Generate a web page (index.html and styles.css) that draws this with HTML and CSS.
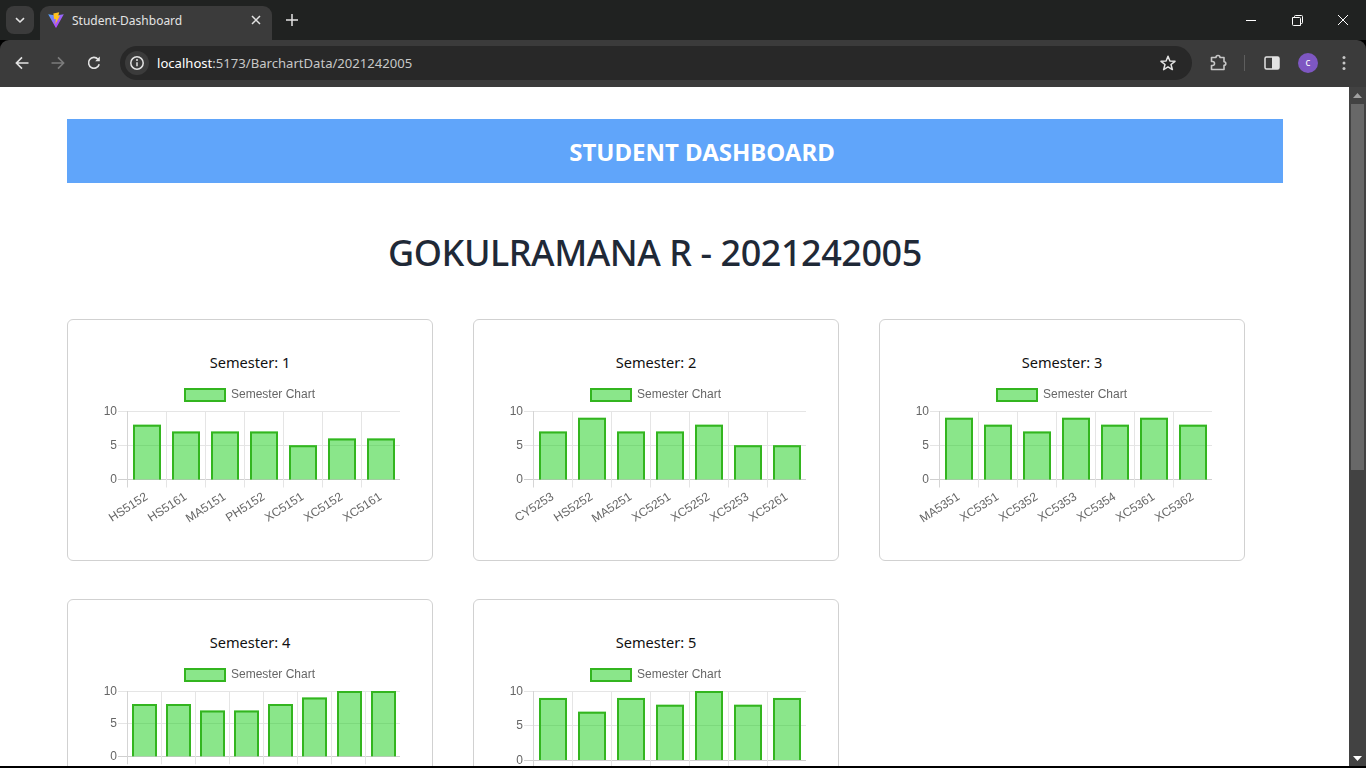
FILE: index.html
```html
<!DOCTYPE html>
<html lang="en">
<head>
  <meta charset="UTF-8">
  <title>Student-Dashboard</title>
  <link rel="stylesheet" href="styles.css">
</head>
<body>
  <div class="tabStrip">
    <div class="tabSearch">
      <svg width="12" height="12" viewBox="0 0 12 12"><path d="M2 4.2 6 8l4-3.8" fill="none" stroke="#e3e3e3" stroke-width="1.6"/></svg>
    </div>
    <div class="tab">
      <svg class="favicon" width="16" height="16" viewBox="0 0 16 16">
        <defs>
          <linearGradient id="viteBody" x1="0" y1="0" x2="1" y2="1">
            <stop offset="0" stop-color="#4fa8ff"/>
            <stop offset="0.6" stop-color="#a855f7"/>
            <stop offset="1" stop-color="#bd34fe"/>
          </linearGradient>
        </defs>
        <path d="M0.2 2.3 7.7 3.6 15.8 2.3 8.4 15.5Q8 16 7.6 15.5Z" fill="url(#viteBody)"/>
        <path d="M5.3 1.4 11.2 0.2 10.2 4 12 3.6 7.3 12.2 8 6.9 6.2 7.3Z" fill="#ffc21f"/>
      </svg>
      <span class="tabTitle">Student-Dashboard</span>
      <svg class="tabClose" width="10" height="10" viewBox="0 0 10 10"><path d="M1 1l8 8M9 1l-8 8" stroke="#e3e3e3" stroke-width="1.5"/></svg>
    </div>
    <svg class="newTab" width="12" height="12" viewBox="0 0 12 12"><path d="M6 0v12M0 6h12" stroke="#e3e3e3" stroke-width="1.5"/></svg>
    <div class="windowBtns">
      <svg width="46" height="12" viewBox="0 0 46 12"><path d="M18 6.5h10" stroke="#fff" stroke-width="1"/></svg>
      <svg width="46" height="12" viewBox="0 0 46 12"><path d="M18.5 3.5h7a1 1 0 0 1 1 1v7h-7a1 1 0 0 1-1-1Z M20.5 3.5v-1a1 1 0 0 1 1-1h6a1 1 0 0 1 1 1v6a1 1 0 0 1-1 1h-.5" fill="none" stroke="#fff" stroke-width="1"/></svg>
      <svg width="46" height="12" viewBox="0 0 46 12"><path d="M18 1l10 10M28 1 18 11" stroke="#fff" stroke-width="1"/></svg>
    </div>
  </div>

  <div class="toolbar">
    <svg class="navIcon" width="16" height="16" viewBox="0 0 16 16"><path d="M14.5 8H2.5M8 2.4 2.4 8 8 13.6" fill="none" stroke="#e3e3e3" stroke-width="1.6"/></svg>
    <svg class="navIcon" width="16" height="16" viewBox="0 0 16 16"><path d="M1.5 8h12M8 2.4 13.6 8 8 13.6" fill="none" stroke="#7c7c7c" stroke-width="1.6"/></svg>
    <svg class="navIcon" width="16" height="16" viewBox="0 0 16 16"><path d="M13.2 9.2A5.4 5.4 0 1 1 12 4.2" fill="none" stroke="#e3e3e3" stroke-width="1.6"/><path d="M13.8 1.6v4.6H9.2Z" fill="#e3e3e3"/></svg>
    <div class="addressBar">
      <div class="siteInfo">
        <svg width="16" height="16" viewBox="0 0 16 16"><circle cx="8" cy="8" r="6.2" fill="none" stroke="#e3e3e3" stroke-width="1.5"/><path d="M8 7.2v4" stroke="#e3e3e3" stroke-width="1.5"/><circle cx="8" cy="5" r="1" fill="#e3e3e3"/></svg>
      </div>
      <span class="url"><span class="host">localhost</span>:5173/BarchartData/2021242005</span>
      <svg class="star" width="18" height="18" viewBox="0 0 18 18"><path d="M9 2.2 10.9 7 16 7.3 12 10.5 13.4 15.6 9 12.8 4.6 15.6 6 10.5 2 7.3 7.1 7Z" fill="none" stroke="#e3e3e3" stroke-width="1.5" stroke-linejoin="round"/></svg>
    </div>
    <svg class="extIcon" width="18" height="18" viewBox="0 0 18 18"><path d="M2.5 3.5H7a2 2 0 0 1 4 0h4v4.2a1.8 1.8 0 0 1 0 3.6v4.2H2.5v-4h1a2 2 0 0 0 0-4h-1Z" fill="none" stroke="#c7c7c7" stroke-width="1.6" stroke-linejoin="round"/></svg>
    <div class="toolbarSep"></div>
    <svg class="sideIcon" width="16" height="16" viewBox="0 0 16 16"><rect x="1" y="2" width="14" height="12" rx="1.5" fill="none" stroke="#e3e3e3" stroke-width="1.5"/><rect x="8" y="2" width="7" height="12" fill="#e3e3e3"/></svg>
    <div class="avatar">c</div>
    <svg class="menuIcon" width="4" height="16" viewBox="0 0 4 16"><circle cx="2" cy="2.5" r="1.5" fill="#c7c7c7"/><circle cx="2" cy="8" r="1.5" fill="#c7c7c7"/><circle cx="2" cy="13.5" r="1.5" fill="#c7c7c7"/></svg>
  </div>

  <div class="viewport">
    <main class="page">
      <div class="container">
        <header class="banner">STUDENT DASHBOARD</header>
        <div class="content">
          <h1 class="studentName">GOKULRAMANA R - 2021242005</h1>
          <div class="cardGrid" id="cardGrid"></div>
        </div>
      </div>
    </main>
    <div class="scrollbar">
      <svg class="arrow" width="9" height="5" viewBox="0 0 9 5"><path d="M4.5 0 9 5H0Z" fill="#a0a0a0"/></svg>
      <div class="thumb"></div>
      <svg class="arrow arrowDown" width="9" height="5" viewBox="0 0 9 5"><path d="M0 0h9L4.5 5Z" fill="#fff"/></svg>
    </div>
  </div>

  <script src="charts.js"></script>
</body>
</html>
```

FILE: styles.css
```css
* { box-sizing: border-box; }
html, body { height: 100%; }
body {
  margin: 0;
  height: 768px;
  overflow: hidden;
  background-color: #000;
  font-family: "Noto Sans", "Open Sans", sans-serif;
}

/* browser chrome */
.tabStrip {
  height: 40px;
  background-color: #202221;
  display: flex;
  align-items: flex-start;
}
.tabSearch {
  width: 28px;
  height: 28px;
  margin: 6px 0 0 6px;
  background-color: #3b3b3b;
  border-radius: 8px;
  display: flex;
  align-items: center;
  justify-content: center;
}
.tab {
  width: 232px;
  height: 34px;
  margin: 6px 0 0 6px;
  padding: 0 11px 6px 8px;
  background-color: #3b3b3b;
  border-radius: 9px 9px 0 0;
  display: flex;
  align-items: center;
  color: #e3e3e3;
  font-size: 12px;
}
.tabTitle { flex: 1; margin-left: 8px; }
.newTab { margin: 14px 0 0 14px; }
.windowBtns {
  margin-left: auto;
  margin-top: 14px;
  display: flex;
}
.windowBtns svg { display: block; }

.toolbar {
  height: 47px;
  background-color: #3b3b3b;
  border-radius: 9px 9px 0 0;
  display: flex;
  align-items: center;
  padding: 0 0 1px 14px;
}
.navIcon { margin-right: 20px; }
.addressBar {
  width: 1072px;
  height: 34px;
  margin-left: -2px;
  padding: 0 15px 0 5px;
  background-color: #282828;
  border-radius: 17px;
  display: flex;
  align-items: center;
}
.siteInfo {
  width: 24px;
  height: 24px;
  background-color: #3b3b3b;
  border-radius: 50%;
  display: flex;
  align-items: center;
  justify-content: center;
}
.url {
  flex: 1;
  margin-left: 8px;
  font-size: 13.1px;
  color: #c7c7c7;
}
.host { color: #fff; }
.extIcon { margin-left: 17px; }
.toolbarSep {
  width: 1px;
  height: 16px;
  margin-left: 17px;
  background-color: #5e5e5e;
}
.sideIcon { margin-left: 19px; }
.avatar {
  width: 20px;
  height: 20px;
  margin-left: 18px;
  background-color: #7e57c2;
  border-radius: 50%;
  color: #fff;
  font-size: 10px;
  line-height: 19px;
  text-align: center;
}
.menuIcon { margin-left: 24px; }

/* page */
.viewport {
  height: 679px;
  display: flex;
}
.page {
  flex: 1;
  overflow: hidden;
  background-color: #fff;
}
.container {
  width: 1216px;
  margin: 32px 0 0 67px;
}
.banner {
  height: 64px;
  background-color: #60a5fa;
  color: #fff;
  font-size: 24px;
  font-weight: 700;
  line-height: 66px;
  text-align: center;
  padding-left: 54px;
}
.content { width: 1178px; }
.studentName {
  margin: 45px 0 41px;
  height: 50px;
  color: #1f2937;
  font-size: 36px;
  font-weight: 500;
  letter-spacing: -0.46px;
  line-height: 50px;
  text-align: center;
  padding-right: 2px;
}
.cardGrid {
  display: grid;
  grid-template-columns: repeat(3, 366px);
  column-gap: 40px;
  row-gap: 38px;
}
.card {
  height: 242px;
  padding: 32px 22px 0;
  background-color: #fff;
  border: 1px solid #d1d1d1;
  border-radius: 6px;
}
.cardTitle {
  margin: 0 0 12px;
  color: #111;
  font-size: 14.6px;
  line-height: 20px;
  text-align: center;
}
.chart {
  display: block;
  will-change: transform;
}
.chart text {
  font-family: "Liberation Sans", Arial, sans-serif;
  font-size: 12px;
  fill: #666;
}

/* fake scrollbar */
.scrollbar {
  width: 17px;
  background-color: #424242;
  display: flex;
  flex-direction: column;
  align-items: center;
}
.arrow { margin-top: 6px; }
.thumb {
  width: 13px;
  height: 366px;
  margin-top: 6px;
  background-color: #686868;
}
.arrowDown { margin-top: auto; margin-bottom: 5px; }
```

FILE: charts.js
```js
// labels of the second row sit below the fold, so they are left out
const semesters = [
  { sem: 1, bottom: 95.5, marks: [8, 7, 7, 7, 5, 6, 6], labels: ["HS5152", "HS5161", "MA5151", "PH5152", "XC5151", "XC5152", "XC5161"] },
  { sem: 2, bottom: 95.5, marks: [7, 9, 7, 7, 8, 5, 5], labels: ["CY5253", "HS5252", "MA5251", "XC5251", "XC5252", "XC5253", "XC5261"] },
  { sem: 3, bottom: 95.5, marks: [9, 8, 7, 9, 8, 9, 8], labels: ["MA5351", "XC5351", "XC5352", "XC5353", "XC5354", "XC5361", "XC5362"] },
  { sem: 4, bottom: 92.3, marks: [8, 8, 7, 7, 8, 9, 10, 10], labels: [] },
  { sem: 5, bottom: 96, marks: [9, 7, 9, 8, 10, 8, 9], labels: [] }
];

const plotLeft = 37;
const plotRight = 310;
const plotTop = 27;

function drawChart(item) {
  const step = (plotRight - plotLeft) / item.marks.length;
  const height = item.bottom - plotTop;
  let svg = '<svg class="chart" width="320" height="146" viewBox="0 0 320 146">';

  // legend
  svg += '<rect x="95" y="5" width="40" height="12" fill="#8ae68a" stroke="#33b51f" stroke-width="2"/>';
  svg += '<text x="141" y="14">Semester Chart</text>';

  // y axis
  [10, 5, 0].forEach((tick) => {
    const y = Math.floor(plotTop + height * (1 - tick / 10)) + 0.5;
    const color = tick === 0 ? "#cfcfcf" : "#e5e5e5";
    svg += `<path d="M28 ${y}H${plotRight}" stroke="${color}"/>`;
    svg += `<text x="27" y="${y + 3}" text-anchor="end">${tick}</text>`;
  });

  item.marks.forEach((mark, i) => {
    const lineX = Math.floor(plotLeft + step * i) + 0.5;
    svg += `<path d="M${lineX} ${plotTop}V${item.bottom + 8}" stroke="${i === 0 ? "#d5d5d5" : "#e5e5e5"}"/>`;
  });

  item.marks.forEach((mark, i) => {
    const cx = plotLeft + step * (i + 0.5);
    const w = Math.round(step * 0.72);
    const left = Math.round(cx - w / 2 + 0.2);
    const y = plotTop + height * (1 - mark / 10);
    svg += `<rect x="${left}" y="${y}" width="${w}" height="${item.bottom - y}" fill="rgba(21,205,21,0.5)"/>`;
    svg += `<path d="M${left + 1} ${item.bottom}V${y + 1}H${left + w - 1}V${item.bottom}" fill="none" stroke="#33b51f" stroke-width="2"/>`;
    if (item.labels[i]) {
      svg += `<text transform="translate(${cx + 2} ${item.bottom + 19}) rotate(-33)" text-anchor="end">${item.labels[i]}</text>`;
    }
  });

  return svg + "</svg>";
}

const grid = document.getElementById("cardGrid");
semesters.forEach((item) => {
  const card = document.createElement("div");
  card.className = "card";
  card.innerHTML = `<p class="cardTitle">Semester: ${item.sem}</p>` + drawChart(item);
  grid.appendChild(card);
});
```
